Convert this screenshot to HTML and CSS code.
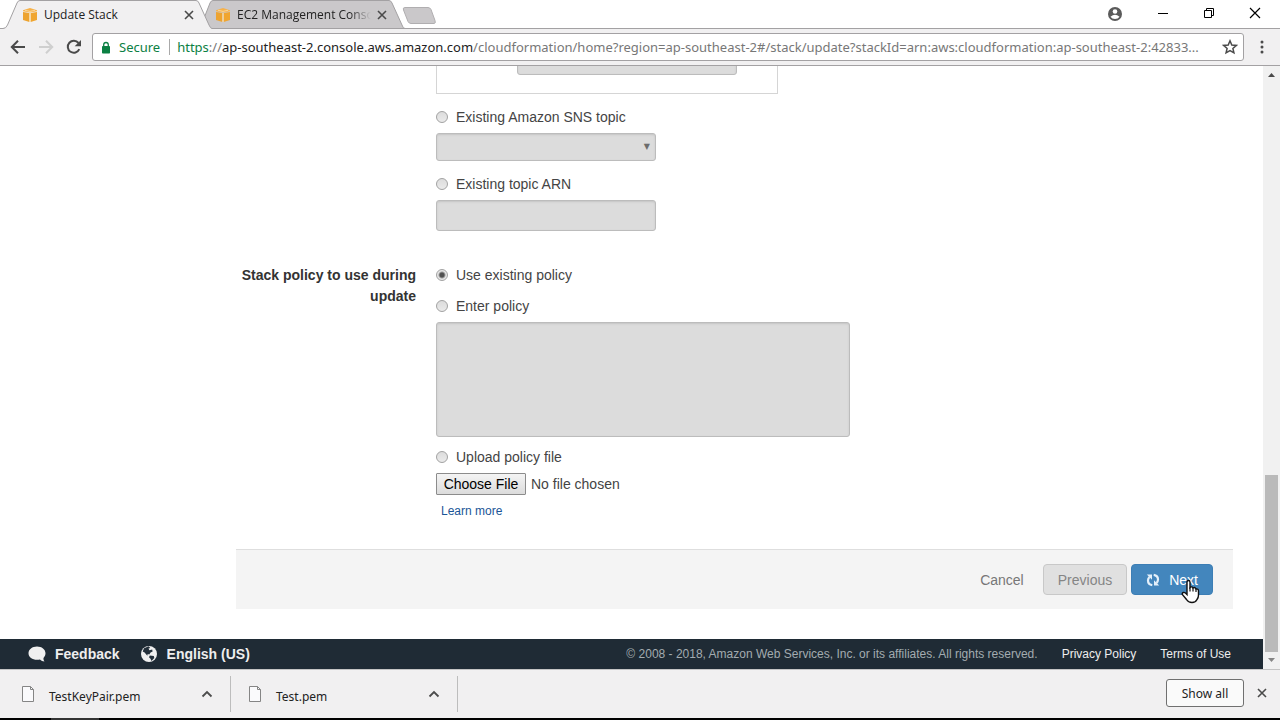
FILE: index.html
```html
<!DOCTYPE html>
<html lang="en">
<head>
<meta charset="utf-8">
<meta name="viewport" content="width=device-width, initial-scale=1">
<title>Update Stack</title>
<link rel="stylesheet" href="styles.css">
</head>
<body>
<svg class="defs" aria-hidden="true">
  <symbol id="cube" viewBox="0 0 16 16">
    <path d="M1 3.200 8 1l7 2.200v1L8 5.400 1 4.200z" fill="#f7b24a"/>
    <path d="M1 5l6.400 1.100V15L1 13z" fill="#eda32f"/>
    <path d="M15 5 8.600 6.100V15L15 13z" fill="#f0a52f"/>
    <path d="M3 3.300 8 4.400l5-1.100" fill="none" stroke="#fbd79a" stroke-width="1"/>
    <path d="M8 6v9" stroke="#fbdca6" stroke-width="1.200"/>
  </symbol>
  <symbol id="cross" viewBox="0 0 10 10">
    <path d="M1 1l8 8M9 1 1 9" fill="none" stroke="currentColor" stroke-width="1.600"/>
  </symbol>
  <symbol id="file" viewBox="0 0 14 18">
    <path d="M1.500 1.500h8l3 3v12h-11z" fill="#fafafc" stroke="#858585"/>
    <path d="M9.500 1.500v3h3" fill="none" stroke="#858585"/>
  </symbol>
  <symbol id="caret-up" viewBox="0 0 12 8">
    <path d="M1.500 6.500 6 2l4.500 4.500" fill="none" stroke="#4c4c4c" stroke-width="1.800"/>
  </symbol>
</svg>

<header class="browser-top">
  <div class="tab-strip">
    <div class="tab tab-active">
      <svg class="tab-shape" viewBox="0 0 212 29" aria-hidden="true"><path d="M0 28.500H3Q6 28.500 7.500 25L17 3Q18 .5 20 .5H196Q198 .5 199 3L209 25Q210.500 28.500 212 28.500V29H0z" fill="#f1f0f1"/><path d="M0 28.500H3Q6 28.500 7.500 25L17 3Q18 .5 20 .5H196Q198 .5 199 3L209 25Q210.500 28.500 212 28.500" fill="none" stroke="#a3a1a3"/></svg>
      <svg class="tab-icon" aria-hidden="true"><use href="#cube"/></svg>
      <span class="tab-title">Update Stack</span>
      <button class="tab-close" aria-label="Close Update Stack"><svg><use href="#cross"/></svg></button>
    </div>
    <div class="tab">
      <svg class="tab-shape" viewBox="0 0 212 29" aria-hidden="true"><path d="M7 28.500 17 3Q18 .5 20 .5H196Q198 .5 199 3L209 25Q210 28.500 212 28.500z" fill="#cac8ca" stroke="#a3a1a3"/></svg>
      <svg class="tab-icon" aria-hidden="true"><use href="#cube"/></svg>
      <span class="tab-title tab-title-fade">EC2 Management Conso</span>
      <button class="tab-close" aria-label="Close EC2 Management Console"><svg><use href="#cross"/></svg></button>
    </div>
    <button class="new-tab" aria-label="New tab"><svg viewBox="0 0 36 19"><path d="M4 1.500h23q2 0 3 2l4 11q1 3-1 3H10q-2 0-3-2L2.500 4Q1.500 1.500 4 1.500z" fill="#cac8ca" stroke="#b0aeb0"/></svg></button>
    <div class="window-controls">
      <button aria-label="Profile"><svg viewBox="0 0 16 16"><circle cx="8" cy="8" r="7" fill="#5a5a5a"/><circle cx="8" cy="5.500" r="2.300" fill="#fff"/><path d="M3.500 10.700Q8 7 12.500 10.700 11 13 8 13T3.500 10.700z" fill="#fff"/></svg></button>
      <button aria-label="Minimize"><svg viewBox="0 0 16 16"><path d="M3 7.500h10" stroke="#000"/></svg></button>
      <button aria-label="Restore"><svg viewBox="0 0 16 16"><path d="M3.500 4.500h7v7h-7zM5.500 4.500v-2h7v7h-2" fill="none" stroke="#000"/></svg></button>
      <button aria-label="Close window"><svg viewBox="0 0 16 16"><path d="M3 2l10 10M13 2 3 12" stroke="#000" stroke-width="1.200"/></svg></button>
    </div>
  </div>
  <div class="toolbar">
    <button class="nav" aria-label="Back"><svg viewBox="0 0 16 16"><path d="M15 8H2.500M8 1.800 1.800 8 8 14.200" fill="none" stroke="#4a4a4a" stroke-width="2"/></svg></button>
    <button class="nav" aria-label="Forward" disabled><svg viewBox="0 0 16 16"><path d="M1 8h12.500M8 1.800 14.200 8 8 14.200" fill="none" stroke="#cfcfcf" stroke-width="2"/></svg></button>
    <button class="nav" aria-label="Reload"><svg viewBox="0 0 16 16"><path d="M13.300 10.200A6 6 0 1 1 12.500 4" fill="none" stroke="#4a4a4a" stroke-width="2"/><path d="M15 1v6.300H8.700z" fill="#4a4a4a"/></svg></button>
    <div class="address">
      <svg class="lock" viewBox="0 0 10 13" aria-hidden="true"><rect x="1" y="5" width="8" height="7.500" rx=".8" fill="#0b8043"/><path d="M2.700 5.500V3.800a2.300 2.300 0 0 1 4.600 0v1.700" fill="none" stroke="#0b8043" stroke-width="1.300"/></svg>
      <span class="secure">Secure</span>
      <div class="url" role="textbox" tabindex="0" aria-label="Address"><span class="scheme">https</span>://<span class="host">ap-southeast-2.console.aws.amazon.com</span>/cloudformation/home?region=ap-southeast-2#/stack/update?stackId=arn:aws:cloudformation:ap-southeast-2:42833...</div>
      <button class="star" aria-label="Bookmark this page"><svg viewBox="0 0 16 16"><path d="M8 1.800l1.800 4.200 4.500.4-3.400 3 1 4.400L8 11.500l-3.900 2.300 1-4.400-3.400-3 4.500-.4z" fill="none" stroke="#4a4a4a" stroke-width="1.500"/></svg></button>
    </div>
    <button class="menu" aria-label="Menu"><svg viewBox="0 0 4 16"><g fill="#4a4a4a"><circle cx="2" cy="3" r="1.500"/><circle cx="2" cy="8" r="1.500"/><circle cx="2" cy="13" r="1.500"/></g></svg></button>
  </div>
</header>

<div class="viewport">
  <div class="page">
    <main class="wizard">
      <form class="options">
        <div class="form-row">
          <div class="fields">
            <div class="topic-panel"><input class="control topic-email" type="text" aria-label="Email" disabled></div>
            <label class="choice"><input type="radio" name="topic"> Existing Amazon SNS topic</label>
            <div class="select-wrap"><select class="control" aria-label="Existing Amazon SNS topic" disabled><option></option></select></div>
            <label class="choice"><input type="radio" name="topic"> Existing topic ARN</label>
            <input class="control" type="text" aria-label="Existing topic ARN" disabled>
          </div>
        </div>
        <div class="form-row" role="group" aria-labelledby="policy-label">
          <div class="row-label" id="policy-label">Stack policy to use during update</div>
          <div class="fields">
            <label class="choice"><input type="radio" name="policy" checked> Use existing policy</label>
            <label class="choice"><input type="radio" name="policy"> Enter policy</label>
            <textarea class="control" aria-label="Policy" disabled></textarea>
            <label class="choice"><input type="radio" name="policy"> Upload policy file</label>
            <input class="upload" type="file" aria-label="Policy file">
            <a class="learn" href="#">Learn more</a>
          </div>
        </div>
      </form>
      <div class="actions">
        <button class="btn btn-link">Cancel</button>
        <button class="btn btn-default" disabled>Previous</button>
        <button class="btn btn-primary"><svg viewBox="0 0 14 14" aria-hidden="true"><path d="M6.300 12.200Q2 11.500 2 7.500 2 5.500 3.500 4M7.700 1.800Q12 2.500 12 6.500 12 8.500 10.500 10" fill="none" stroke="#e4f0fa" stroke-width="2.200"/><path d="M.8 1.500H6v5.200zM13.200 12.500H8V7.300z" fill="#e4f0fa"/></svg>Next
          <svg class="pointer" viewBox="0 0 20 26" aria-hidden="true"><path d="M6 14.500V3.200Q6 1.500 7.500 1.500T9 3.200V8.500Q10 7.500 11.500 8.200L12 9Q13.500 8 14.700 9.400L15 10.200Q17.500 9.500 17.500 12V16Q17.500 18.500 16 20.500 14.700 23.500 11 23.500 7.300 23.500 5.500 20.500L1.300 15.500Q.8 14 2.300 13.500 3.800 13 6 15.500z" fill="#fff" stroke="#111" stroke-width="1.400"/><path d="M9 8.500v4M12 9v3.500M15 10.200v2.800" stroke="#111" stroke-width="1.200"/></svg>
        </button>
      </div>
    </main>
    <footer class="aws-footer">
      <button class="foot-tool"><svg viewBox="0 0 18 18" aria-hidden="true"><path d="M9 1.500c-4.700 0-8.500 2.900-8.500 6.800s3.800 6.500 8.500 6.500c1.200 0 2-.1 2.900-.3 1.300 1.300 2.800 2 4.600 2-.8-1.200-1.200-2.300-1-3.600 1.300-1.300 2-2.900 2-4.600C17.500 4.400 13.700 1.500 9 1.500z" fill="#f0f0f0"/></svg>Feedback</button>
      <button class="foot-tool foot-language"><svg viewBox="0 0 18 18" aria-hidden="true"><circle cx="9" cy="9" r="8" fill="#f0f0f0"/><path d="M4 3.200 8.800 1.300l1.400 1.800-1.700.4.900 1.700 2.800-.8.400 2-2 1.200L9.300 9.500 7.700 9l-.4 1.700L4.600 7.500 2.700 6.500zM9.800 10.500l4 .6.500 2-2.800 3-1-2.400-1.500-1.500z" fill="#232f3a"/></svg>English (US)</button>
      <small class="copyright">© 2008 - 2018, Amazon Web Services, Inc. or its affiliates. All rights reserved.</small>
      <a href="#">Privacy Policy</a>
      <a href="#">Terms of Use</a>
    </footer>
  </div>
  <div class="scrollbar" aria-hidden="true">
    <svg viewBox="0 0 17 17"><path d="M5 11l3.500-4 3.500 4z" fill="#4a4a4a"/></svg>
    <div class="scroll-thumb"></div>
    <svg class="scroll-down" viewBox="0 0 17 17"><path d="M5 6l3.500 4L12 6z" fill="#858585"/></svg>
  </div>
</div>

<section class="downloads" aria-label="Downloads">
  <div class="download"><svg class="file-icon" aria-hidden="true"><use href="#file"/></svg><span>TestKeyPair.pem</span><button class="more" aria-label="TestKeyPair.pem options"><svg><use href="#caret-up"/></svg></button></div>
  <div class="download"><svg class="file-icon" aria-hidden="true"><use href="#file"/></svg><span>Test.pem</span><button class="more" aria-label="Test.pem options"><svg><use href="#caret-up"/></svg></button></div>
  <button class="show-all">Show all</button>
  <button class="hide-bar" aria-label="Close downloads bar"><svg><use href="#cross"/></svg></button>
</section>
<div class="taskbar"><span class="taskbar-app"></span></div>
</body>
</html>
```
FILE: styles.css
```css
* { box-sizing: border-box; }
body {
  margin: 0;
  height: 100vh;
  display: flex;
  flex-direction: column;
  overflow: hidden;
  background: #fff;
  color: #444;
  font: 14px/21px "Liberation Sans", Arial, sans-serif;
}
button {
  margin: 0;
  padding: 0;
  border: 0;
  background: none;
  color: inherit;
  font: inherit;
}
svg { display: block; flex: none; }
.defs { position: absolute; width: 0; height: 0; }

/* Browser frame */
.browser-top, .downloads { font-family: "Noto Sans", "Open Sans", sans-serif; }
.tab-strip {
  display: flex;
  height: 29px;
  background: #fff;
  border-bottom: 1px solid #a3a1a3;
}
.tab {
  position: relative;
  isolation: isolate;
  display: flex;
  align-items: center;
  width: 212px;
  height: 29px;
  padding: 0 18px 0 22px;
  font-family: "Open Sans", "Noto Sans", sans-serif;
  font-size: 12px;
  color: #222;
}
.tab-active { z-index: 1; }
.tab + .tab { margin-left: -19px; }
.tab-shape { position: absolute; inset: 0; width: 100%; height: 100%; z-index: -1; }
.tab-icon { width: 16px; height: 16px; margin-right: 6px; }
.tab-title { flex: 1; min-width: 0; white-space: nowrap; overflow: hidden; }
.tab-title-fade {
  -webkit-mask-image: linear-gradient(to right, #000 84%, transparent);
  mask-image: linear-gradient(to right, #000 84%, transparent);
}
.tab-close { width: 10px; margin-left: 6px; color: #4a4a4a; }
.tab-close svg, .hide-bar svg { width: 10px; height: 10px; }
.new-tab { align-self: center; margin-left: -4px; padding-top: 2px; }
.new-tab svg { width: 36px; height: 19px; }
.window-controls { display: flex; align-items: center; gap: 30px; margin-left: auto; padding-right: 17px; }
.window-controls svg { width: 16px; height: 16px; }
.window-controls button:nth-child(2) { margin-left: 2px; }
.toolbar {
  display: flex;
  align-items: center;
  height: 37px;
  padding: 0 16px 0 10px;
  background: #f1f0f1;
  border-bottom: 1px solid #a3a1a3;
}
.nav { width: 16px; margin-right: 12px; }
.nav svg { width: 16px; height: 16px; }
.nav:nth-child(3) { margin-right: 10px; }
.address {
  display: flex;
  align-items: center;
  flex: 1;
  min-width: 0;
  height: 28px;
  padding: 0 5px 0 8px;
  background: #fff;
  border: 1px solid #a3a1a3;
  border-radius: 3px;
  font-size: 13px;
}
.lock { width: 10px; height: 13px; margin-right: 8px; }
.secure { color: #0b8043; padding-right: 9px; border-right: 1px solid #a9a9a9; line-height: 16px; }
.url { flex: 1; min-width: 0; margin-left: 7px; overflow: hidden; white-space: nowrap; color: #777; }
.scheme { color: #0b8043; }
.host { color: #222; }
.star { margin-left: 6px; }
.star svg { width: 16px; height: 16px; }
.menu { margin-left: 16px; }
.menu svg { width: 4px; height: 16px; }

/* Page */
.viewport { display: flex; flex: 1; min-height: 0; overflow: hidden; }
.page { display: flex; flex-direction: column; flex: 1; min-width: 0; }
.wizard { flex: 1; padding: 0 30px 30px 236px; }
.form-row { display: flex; gap: 20px; }
.form-row:first-child .fields { margin-left: 200px; }
.form-row + .form-row { margin-top: 34px; }
.row-label { width: 180px; font-weight: bold; text-align: right; color: #333; }
.fields { display: flex; flex-direction: column; align-items: flex-start; flex: 1; }
.topic-panel {
  width: 342px;
  height: 28px;
  padding: 0 40px 18px;
  display: flex;
  align-items: flex-end;
  justify-content: flex-end;
  overflow: hidden;
  border: 1px solid #d5d5d5;
  border-top: 0;
}
.choice { display: flex; align-items: center; gap: 8px; margin-bottom: 5px; }
.choice + .choice { margin-top: 5px; }
.topic-panel + .choice, .control + .choice, .select-wrap + .choice { margin-top: 13px; }
textarea.control + .choice { margin-top: 10px; }
input[type="radio"] {
  appearance: none;
  width: 12px;
  height: 12px;
  margin: 0 0 2px;
  border: 1px solid #a2a2a2;
  border-radius: 50%;
  background: linear-gradient(#dcdcdc, #eaeaea);
}
input[type="radio"]:checked { background: radial-gradient(circle, #505050 0 2px, #e6e6e6 4px); }
.control {
  display: block;
  flex: none;
  width: 220px;
  height: 31px;
  margin: 0;
  padding: 4px 8px;
  border: 1px solid #bcbcbc;
  border-radius: 3px;
  background: #dcdcdc;
  box-shadow: inset 0 1px 2px #c4c4c4;
  font: inherit;
}
.select-wrap { position: relative; }
.select-wrap::after { content: "▼"; position: absolute; right: 6px; top: 3px; font: 8px/21px "DejaVu Sans", sans-serif; color: #6c6c6c; }
select.control { appearance: none; height: 28px; opacity: 1; }
textarea.control { width: 414px; height: 115px; resize: none; }
.upload { height: 22px; font: inherit; line-height: 20px; color: #444; }
.upload::file-selector-button {
  width: 90px;
  height: 22px;
  margin: 0 5px 0 0;
  padding: 0;
  border: 1px solid #8c8c8c;
  border-radius: 1px;
  background: linear-gradient(#f4f4f4, #dcdcdc);
  color: #000;
  font: inherit;
}
.learn { margin: 6px 0 27px 5px; font-size: 12px; color: #1a5597; text-decoration: none; }
.actions {
  display: flex;
  align-items: center;
  justify-content: flex-end;
  height: 60px;
  padding: 0 20px;
  background: #f4f4f4;
  border-top: 1px solid #dedede;
}
.btn { position: relative; display: flex; align-items: center; height: 31px; padding: 1px 14px 0; border: 1px solid transparent; border-radius: 4px; }
.btn-link { color: #777; padding: 1px 18px 0; }
.btn-default { background: #e0e0e0; border-color: #c8c8c8; color: #858585; margin-right: 4px; }
.btn-primary { background: #4386bd; border-color: #3c7eb5; color: #fff; }
.btn-primary svg { width: 14px; height: 14px; margin-right: 9px; }
.btn-primary .pointer { position: absolute; left: 49px; top: 14px; width: 20px; height: 26px; margin: 0; }
.aws-footer {
  display: flex;
  align-items: center;
  height: 30px;
  padding: 0 32px 0 28px;
  background: #1f2b35;
  color: #eee;
  font-size: 12px;
}
.foot-tool { display: flex; align-items: center; gap: 9px; margin-right: 20px; font-size: 14px; font-weight: bold; }
.foot-tool svg { width: 18px; height: 18px; }
.copyright { margin-left: auto; font-size: 12px; color: #a3abb0; }
.aws-footer a { margin-left: 24px; color: #eee; text-decoration: none; }
.scrollbar { display: grid; grid-template-rows: 17px 1fr 177px 17px; width: 17px; background: #f1f1f1; }
.scrollbar svg { width: 17px; height: 17px; }
.scroll-thumb { grid-row: 3; margin: 0 2px; background: #bababa; }
.scroll-down { grid-row: 4; }

/* Downloads bar */
.downloads {
  display: flex;
  align-items: center;
  height: 49px;
  padding: 0 13px 0 4px;
  background: #f1f0f1;
  border-top: 1px solid #c4c4c4;
  font-size: 12px;
  color: #222;
}
.download {
  display: flex;
  align-items: center;
  width: 227px;
  height: 36px;
  padding: 0 17px;
  border-right: 1px solid #bdbdbd;
}
.download span { padding: 4px 0 0 14px; }
.file-icon { width: 14px; height: 18px; }
.more { margin-left: auto; }
.more svg { width: 12px; height: 8px; }
.show-all { width: 78px; height: 28px; margin-left: auto; margin-bottom: 2px; border: 1px solid #707070; border-radius: 3px; background: #fafafa; }
.hide-bar { margin: 0 0 2px 13px; color: #4a4a4a; }
.taskbar { height: 2px; padding-left: 51px; background: #000; }
.taskbar-app { display: block; width: 48px; height: 2px; background: #333; }
```
